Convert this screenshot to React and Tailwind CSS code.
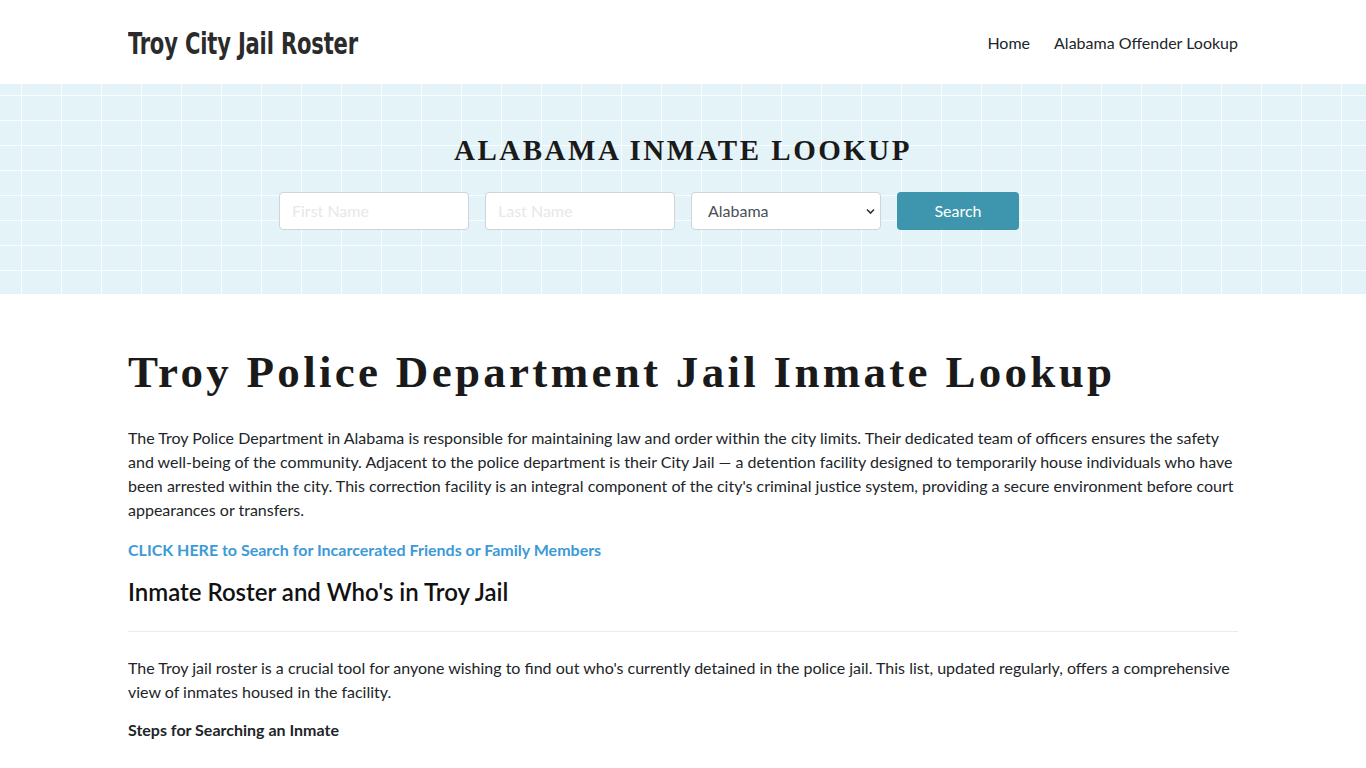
export default function App() {
  return (
    <div className="min-h-screen bg-white text-[#212529]" style={{ fontFamily: 'Lato, "Noto Sans", sans-serif' }}>
      {/* Header */}
      <header className="h-[84px] bg-white">
        <div className="mx-auto flex h-full w-[1110px] items-center justify-between pt-[2px]">
          <a href="#" className="inline-block origin-left scale-x-[0.78] text-[30px] font-bold tracking-[-0.2px] text-[#2b2b2b] [font-family:'DejaVu_Sans',sans-serif] [font-stretch:condensed]">
            Troy City Jail Roster
          </a>
          <nav className="flex items-center gap-[24px] text-[16px] text-[#212529]">
            <a href="#">Home</a>
            <a href="#">Alabama Offender Lookup</a>
          </nav>
        </div>
      </header>

      {/* Hero search */}
      <section className="h-[210px] bg-[#e4f3f8] bg-[linear-gradient(90deg,rgba(255,255,255,0.8)_1.5px,transparent_1.5px),linear-gradient(0deg,rgba(255,255,255,0.8)_1.5px,transparent_1.5px)] bg-[size:40px_25px] bg-[position:21px_12px]">
        <div className="flex flex-col items-center pt-[45px]">
          <h2 className="text-[29px] font-bold uppercase tracking-[2.5px] text-[#1a1a1a] [font-family:'Liberation_Serif',serif]">
            Alabama Inmate Lookup
          </h2>
          <form className="mr-[68px] mt-[19px] flex gap-4">
            <input
              placeholder="First Name"
              className="h-[38px] w-[190px] rounded-[4px] border border-[#ced4da] bg-white px-3 text-[16px] outline-none placeholder:text-[#e6e8eb]"
            />
            <input
              placeholder="Last Name"
              className="h-[38px] w-[190px] rounded-[4px] border border-[#ced4da] bg-white px-3 text-[16px] outline-none placeholder:text-[#e6e8eb]"
            />
            <div className="relative">
              <select className="h-[38px] w-[190px] appearance-none rounded-[4px] border border-[#ced4da] bg-white pl-4 text-[16px] text-[#495057] outline-none">
                <option>Alabama</option>
              </select>
              <svg className="pointer-events-none absolute right-[6px] top-[16px]" width="9" height="7" viewBox="0 0 9 7">
                <path d="M1 1.5 L4.5 5 L8 1.5" fill="none" stroke="#333" strokeWidth="1.6" />
              </svg>
            </div>
            <button type="button" className="h-[38px] w-[122px] rounded-[4px] bg-[#3d96ad] text-[16px] text-white">
              Search
            </button>
          </form>
        </div>
      </section>

      {/* Content */}
      <main className="mx-auto w-[1110px] pt-[50px]">
        <h1 className="text-[45px] font-bold leading-[56px] tracking-[3.3px] text-[#1a1a1a] [font-family:'Liberation_Serif',serif]">
          Troy Police Department Jail Inmate Lookup
        </h1>
        <p className="mt-[26px] text-[16px] leading-[24px]">
          The Troy Police Department in Alabama is responsible for maintaining law and order within the city limits. Their dedicated team of officers ensures the safety and well-being of the community. Adjacent to the police department is their City Jail — a detention facility designed to temporarily house individuals who have been arrested within the city. This correction facility is an integral component of the city's criminal justice system, providing a secure environment before court appearances or transfers.
        </p>
        <p className="mt-[16px] text-[16px] leading-[24px]">
          <a href="#" className="font-bold text-[#3c9ad7]">CLICK HERE to Search for Incarcerated Friends or Family Members</a>
        </p>
        <h3 className="mt-[14px] text-[24px] font-semibold leading-[32px] text-[#111]">
          Inmate Roster and Who's in Troy Jail
        </h3>
        <hr className="mt-[23px] border-[#e9ecef]" />
        <p className="mt-[24px] text-[16px] leading-[24px]">
          The Troy jail roster is a crucial tool for anyone wishing to find out who's currently detained in the police jail. This list, updated regularly, offers a comprehensive view of inmates housed in the facility.
        </p>
        <p className="mt-[14px] text-[16px] font-bold leading-[24px]">Steps for Searching an Inmate</p>
      </main>
    </div>
  );
}
